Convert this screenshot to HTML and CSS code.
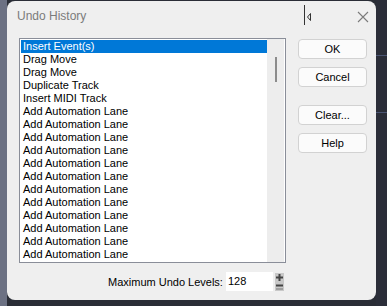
FILE: index.html
```html
<!DOCTYPE html>
<html lang="en">
<head>
    <meta charset="UTF-8">
    <title>Undo History</title>
    <link rel="stylesheet" href="styles.css">
</head>
<body>
    <div class="screen">
        <div class="side-left"></div>
        <div class="dialog">
            <div class="titlebar">
                <span class="title">Undo History</span>
                <svg class="cursor" width="12" height="24" viewBox="0 0 12 24">
                    <line x1="1.5" y1="3" x2="1.5" y2="23" stroke="#333" stroke-width="1"/>
                    <path d="M7.5 11.5 L4.5 15 L7.5 18.5 Z" fill="none" stroke="#333" stroke-width="1"/>
                    <rect x="9" y="24" width="1" height="1" fill="#777"/>
                </svg>
                <svg class="close" width="12" height="12" viewBox="0 0 12 12">
                    <path d="M1 1 L11 11 M11 1 L1 11" stroke="#7a7a7a" stroke-width="1.1"/>
                </svg>
            </div>
            <div class="content">
                <div class="listbox">
                    <ul class="items">
                        <li class="selected">Insert Event(s)</li>
                        <li>Drag Move</li>
                        <li>Drag Move</li>
                        <li>Duplicate Track</li>
                        <li>Insert MIDI Track</li>
                        <li>Add Automation Lane</li>
                        <li>Add Automation Lane</li>
                        <li>Add Automation Lane</li>
                        <li>Add Automation Lane</li>
                        <li>Add Automation Lane</li>
                        <li>Add Automation Lane</li>
                        <li>Add Automation Lane</li>
                        <li>Add Automation Lane</li>
                        <li>Add Automation Lane</li>
                        <li>Add Automation Lane</li>
                        <li>Add Automation Lane</li>
                        <li>Add Automation Lane</li>
                    </ul>
                    <div class="scrollbar"><div class="thumb"></div></div>
                </div>
                <div class="buttons">
                    <button class="btn">OK</button>
                    <button class="btn">Cancel</button>
                    <button class="btn btn-gap">Clear...</button>
                    <button class="btn">Help</button>
                </div>
            </div>
            <div class="levels">
                <span class="levels-label">Maximum Undo Levels:</span>
                <span class="levels-input">128</span>
                <svg class="spinner" width="9" height="18" viewBox="0 0 9 18">
                    <rect x="0" y="0" width="9" height="18" fill="#c8c8c8"/>
                    <path d="M1 4.5 H8 M4.5 1 V8" stroke="#444" stroke-width="2"/>
                    <path d="M1 12.5 H8" stroke="#444" stroke-width="2"/>
                    <path d="M1 16 H8" stroke="#777" stroke-width="1"/>
                </svg>
            </div>
        </div>
        <div class="side-right">
            <div class="rule rule-a"></div>
            <div class="rule rule-b"></div>
        </div>
    </div>
</body>
</html>
```

FILE: styles.css
```css
body {
    margin: 0;
    background-color: #2a2d36;
    font-family: 'Liberation Sans', Arial, sans-serif;
    overflow: hidden;
}
.screen {
    display: flex;
    height: 306px;
    width: 387px;
}
.side-left {
    width: 7px;
    background-color: #6c7183;
    flex-shrink: 0;
}
.dialog {
    width: 369px;
    height: 299px;
    margin-top: 1px;
    background-color: #efefef;
    border-radius: 8px;
    flex-shrink: 0;
    display: flex;
    flex-direction: column;
}
.titlebar {
    height: 37px;
    display: flex;
    align-items: flex-start;
    flex-shrink: 0;
}
.title {
    margin-left: 10px;
    margin-top: 8px;
    font-size: 12px;
    color: #7b7b7b;
}
.cursor {
    margin-left: 217px;
    margin-top: 1px;
}
.close {
    margin-left: 42px;
    margin-top: 10px;
}
.content {
    display: flex;
    padding-left: 12px;
    gap: 12px;
}
.listbox {
    width: 264px;
    height: 222px;
    border: 1px solid #8a8e99;
    background-color: #fff;
    display: flex;
    padding: 1px 0 0 1px;
    box-sizing: content-box;
}
.items {
    list-style: none;
    margin: 0;
    padding: 0;
    width: 246px;
    font-size: 11px;
    color: #000;
}
.items li {
    height: 13px;
    line-height: 13px;
    padding-left: 2px;
    white-space: nowrap;
}
.items li.selected {
    background-color: #0078d7;
    color: #fff;
}
.scrollbar {
    width: 17px;
    background-color: #ededed;
    display: flex;
    justify-content: center;
    margin-top: -1px;
}
.thumb {
    width: 2px;
    height: 25px;
    margin-top: 18px;
    background-color: #8c8c8c;
}
.buttons {
    display: flex;
    flex-direction: column;
    gap: 8px;
    padding-top: 1px;
}
.btn {
    width: 69px;
    height: 20px;
    padding: 0;
    font-family: 'Liberation Sans', Arial, sans-serif;
    font-size: 11px;
    color: #000;
    background-color: #fbfbfb;
    border: 1px solid #d2d2d2;
    border-radius: 4px;
}
.btn-gap {
    margin-top: 10px;
}
.levels {
    display: flex;
    align-items: center;
    margin-top: 9px;
    padding-left: 101px;
    font-size: 11px;
}
.levels-label {
    width: 118px;
}
.levels-input {
    width: 45px;
    height: 19px;
    line-height: 19px;
    padding-left: 2px;
    background-color: #fff;
}
.spinner {
    margin-left: 2px;
}
.side-right {
    flex: 1;
    background-color: #2b2e39;
    display: flex;
    flex-direction: column;
}
.rule {
    height: 1px;
    background-color: #4c5674;
}
.rule-a {
    margin-top: 55px;
}
.rule-b {
    margin-top: 56px;
}
```
